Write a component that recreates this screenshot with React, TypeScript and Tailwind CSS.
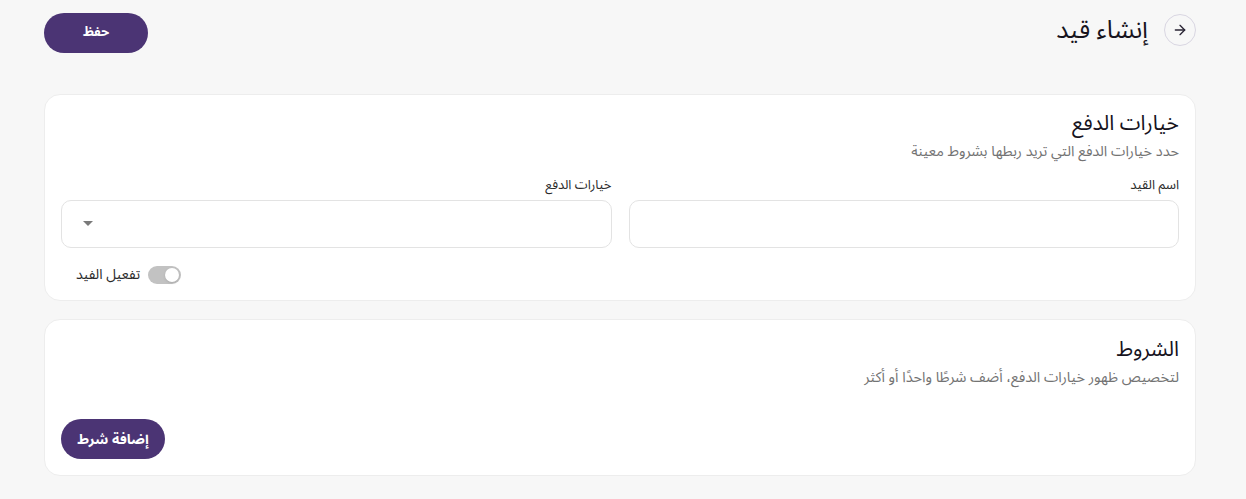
import { ArrowRight } from 'lucide-react';

const font = { fontFamily: '"Noto Sans Arabic", "Noto Sans", "DejaVu Sans", sans-serif' };

export default function App() {
  return (
    <div dir="rtl" className="min-h-[499px] bg-[#f7f7f7] pr-[50px] pl-[44px] pt-[13px] pb-6 text-[#1d1a24]" style={font}>
      {/* header */}
      <div className="flex items-start justify-between">
        <div className="mt-[1px] flex items-center gap-[16px]">
          <button className="flex h-8 w-8 items-center justify-center rounded-full border border-[#d9d6e2] text-[#2a2535]">
            <ArrowRight className="h-4 w-4" strokeWidth={2} />
          </button>
          <h1 className="text-[25px] leading-8 text-[#16131d]">إنشاء قيد</h1>
        </div>
        <button className="h-10 w-[104px] rounded-full bg-[#4b3474] text-[13px] font-bold text-white">حفظ</button>
      </div>

      {/* payment options card */}
      <section className="mt-[41px] rounded-2xl border border-[#ededed] bg-white px-4 pt-[15px] pb-4">
        <h2 className="text-[21px] leading-[26px] text-[#16131d]">خيارات الدفع</h2>
        <p className="mt-[6px] text-[14.5px] leading-5 text-[#737373]">حدد خيارات الدفع التي تريد ربطها بشروط معينة</p>

        <div className="mt-[14px] grid grid-cols-2 gap-[17px]">
          <div>
            <label className="block text-[13px] leading-[18px] text-[#2b2b2b]">اسم القيد</label>
            <input className="mt-[6px] h-12 w-full rounded-[10px] border border-[#e3e3e3] bg-white px-3 outline-none" />
          </div>
          <div>
            <label className="block text-[13px] leading-[18px] text-[#2b2b2b]">خيارات الدفع</label>
            <div className="mt-[6px] flex h-12 w-full items-center justify-end rounded-[10px] border border-[#e3e3e3] bg-white pl-[21px]">
              <svg width="10" height="6" viewBox="0 0 10 6" className="text-[#7a7a7a]">
                <path d="M0 0h10L5 5z" fill="currentColor" />
              </svg>
            </div>
            <div className="mt-[18px] flex items-center justify-end gap-[8px] pl-[15px]">
              <span className="flex h-[18px] w-[33px] items-center justify-start rounded-full bg-[#c2c2c2] px-[2px]">
                <span className="h-[14px] w-[14px] rounded-full bg-white shadow-sm" />
              </span>
              <span className="text-[14px] leading-[18px] text-[#2b2b2b]">تفعيل الفيد</span>
            </div>
          </div>
        </div>
      </section>

      {/* conditions card */}
      <section className="mt-[18px] rounded-2xl border border-[#ededed] bg-white px-4 pt-4 pb-4">
        <h2 className="text-[21px] leading-[26px] text-[#16131d]">الشروط</h2>
        <p className="mt-[6px] text-[14.5px] leading-5 text-[#737373]">لتخصيص ظهور خيارات الدفع، أضف شرطًا واحدًا أو أكثر</p>
        <div className="mt-[31px] flex justify-end">
          <button className="h-10 w-[104px] rounded-full bg-[#4b3474] text-[14px] font-bold text-white">إضافة شرط</button>
        </div>
      </section>
    </div>
  );
}
